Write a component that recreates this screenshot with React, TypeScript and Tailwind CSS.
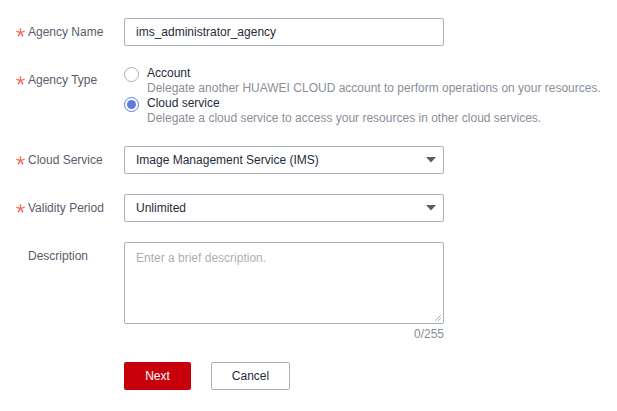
import React, { useState } from 'react';

const font = { fontFamily: '"Liberation Sans", Arial, sans-serif' };

function Star() {
  return (
    <svg width="9" height="9" viewBox="0 0 10 10" className="block">
      <g stroke="#f66f6a" strokeWidth="1.6" strokeLinecap="round">
        <path d="M5 0.8V5" />
        <path d="M5 5L1 3.7" />
        <path d="M5 5L9 3.7" />
        <path d="M5 5L2.5 8.6" />
        <path d="M5 5L7.5 8.6" />
      </g>
    </svg>
  );
}

function Label({ text, required = true }: { text: string; required?: boolean }) {
  return (
    <div className="flex w-[108px] shrink-0 items-center h-7 text-[#575d6c]">
      <span className="w-3 flex items-center">{required && <Star />}</span>
      <span>{text}</span>
    </div>
  );
}

function Radio({ checked }: { checked: boolean }) {
  return (
    <span
      className={
        checked
          ? 'flex items-center justify-center w-[15px] h-[15px] rounded-full border border-[#5e7ce0] bg-white'
          : 'flex items-center justify-center w-[15px] h-[15px] rounded-full border border-[#adb0b8] bg-white'
      }
    >
      {checked && <span className="block w-[9px] h-[9px] rounded-full bg-[#5e7ce0]" />}
    </span>
  );
}

function Select({ value }: { value: string }) {
  return (
    <div className="flex items-center justify-between w-[320px] h-7 border border-[#adb0b8] rounded-[2px] pl-[11px] pr-[7px] text-[#252b3a]">
      <span>{value}</span>
      <svg width="10" height="6" viewBox="0 0 10 6">
        <path d="M0 0h10L5 5.5z" fill="#575d6c" />
      </svg>
    </div>
  );
}

export default function App() {
  const [type, setType] = useState('cloud');

  return (
    <div className="min-h-[411px] bg-white text-[12px] pl-4 pt-[18px]" style={font}>
      <div className="flex flex-col gap-5">
        <div className="flex">
          <Label text="Agency Name" />
          <div className="flex items-center w-[320px] h-7 border border-[#adb0b8] rounded-[2px] pl-[11px] text-[#252b3a]">
            ims_administrator_agency
          </div>
        </div>

        <div className="flex">
          <Label text="Agency Type" />
          <div className="flex flex-col leading-[15px]">
            <div className="flex gap-2 cursor-pointer" onClick={() => setType('account')}>
              <div className="pt-[1px]"><Radio checked={type === 'account'} /></div>
              <div>
                <div className="text-[#252b3a]">Account</div>
                <div className="text-[#8a8e99]">Delegate another HUAWEI CLOUD account to perform operations on your resources.</div>
              </div>
            </div>
            <div className="flex gap-2 cursor-pointer" onClick={() => setType('cloud')}>
              <div className="pt-[1px]"><Radio checked={type === 'cloud'} /></div>
              <div>
                <div className="text-[#252b3a]">Cloud service</div>
                <div className="text-[#8a8e99]">Delegate a cloud service to access your resources in other cloud services.</div>
              </div>
            </div>
          </div>
        </div>

        <div className="flex">
          <Label text="Cloud Service" />
          <Select value="Image Management Service (IMS)" />
        </div>

        <div className="flex">
          <Label text="Validity Period" />
          <Select value="Unlimited" />
        </div>

        <div className="flex">
          <Label text="Description" required={false} />
          <div className="flex flex-col">
            <div className="relative w-[320px] h-[82px] border border-[#adb0b8] rounded-[2px] px-[11px] py-[6px] text-[#adb0b8]">
              Enter a brief description.
              <svg className="absolute right-[2px] bottom-[2px]" width="7" height="7" viewBox="0 0 7 7">
                <path d="M1 7L7 1M4 7L7 4" stroke="#adb0b8" strokeWidth="1" />
              </svg>
            </div>
            <div className="text-right text-[#8a8e99] leading-[18px] mt-[1px]">0/255</div>
          </div>
        </div>
      </div>

      <div className="flex gap-5 pl-[108px] mt-[19px]">
        <button className="w-[67px] h-7 rounded-[2px] bg-[#c7000b] text-white">Next</button>
        <button className="w-[79px] h-7 rounded-[2px] border border-[#adb0b8] bg-white text-[#252b3a]">Cancel</button>
      </div>
    </div>
  );
}
